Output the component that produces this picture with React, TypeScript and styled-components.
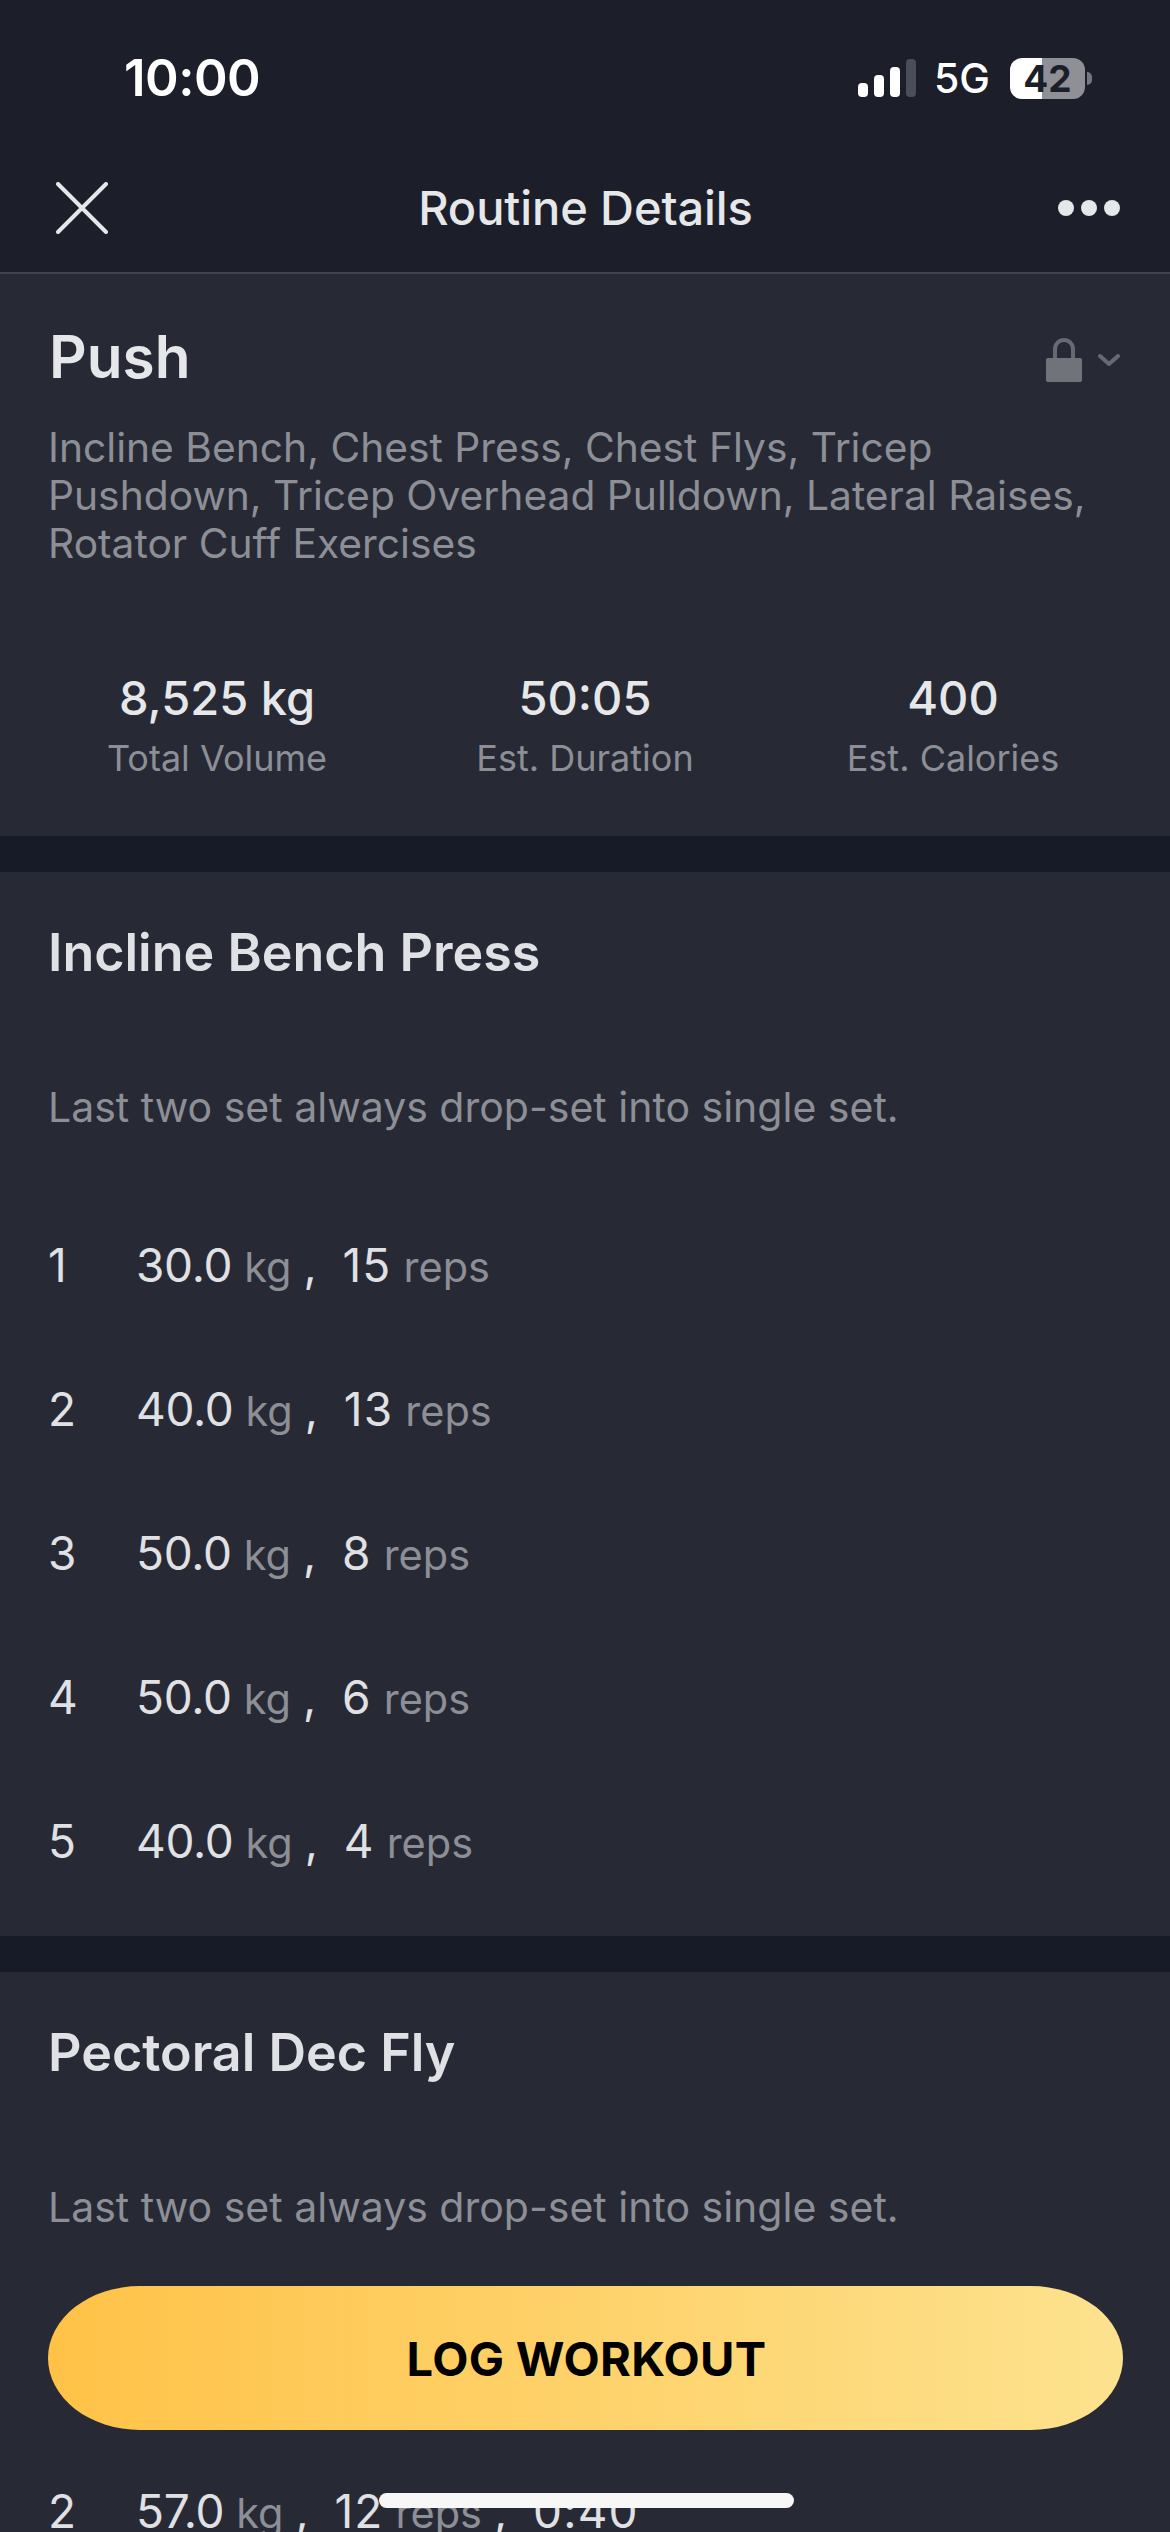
import React from "react";
import styled, { createGlobalStyle } from "styled-components";

const Global = createGlobalStyle`
  html, body { margin: 0; padding: 0; background: #272a34; }
  body { font-family: Inter, "Noto Sans", sans-serif; overflow: hidden; }
  * { box-sizing: border-box; }
`;

const Screen = styled.div`
  position: relative;
  width: 1170px;
  height: 2532px;
  overflow: hidden;
  background: #272a34;
`;

const Top = styled.header`
  height: 274px;
  background: #1c1f2a;
  border-bottom: 2px solid #41434e;
  display: flex;
  flex-direction: column;
`;

const StatusBar = styled.div`
  height: 150px;
  padding: 48px 0 0 124px;
  display: flex;
  align-items: flex-start;
  justify-content: space-between;
`;

const Time = styled.span`
  font-size: 51px;
  font-weight: 600;
  line-height: 60px;
  letter-spacing: -0.5px;
  color: #fff;
`;

const StatusRight = styled.div`
  display: flex;
  align-items: center;
  margin: 8px 85px 0 0;
  height: 44px;
`;

const FiveG = styled.span`
  font-size: 41px;
  font-weight: 500;
  line-height: 44px;
  color: #fff;
  margin: 0 20px 0 18px;
`;

const Battery = styled.div`
  position: relative;
  width: 75px;
  height: 41px;
  border-radius: 12px;
  background: linear-gradient(90deg, #fff 0 43%, #8f9096 43% 100%);
  color: #1c1f2a;
  font-size: 37px;
  font-weight: 700;
  line-height: 41px;
  text-align: center;
  &::after {
    content: "";
    position: absolute;
    right: -7px;
    top: 14px;
    width: 5px;
    height: 13px;
    border-radius: 0 5px 5px 0;
    background: #77787f;
  }
`;

const NavBar = styled.nav`
  flex: 1;
  display: grid;
  grid-template-columns: 1fr auto 1fr;
  align-items: center;
  padding: 0 50px 6px 56px;
`;

const NavEnd = styled.div`
  display: flex;
  justify-content: flex-end;
`;

const NavTitle = styled.h1`
  margin: 0 5px 0 0;
  font-size: 47px;
  font-weight: 500;
  color: #e6e7e9;
  line-height: 56px;
  letter-spacing: -0.1px;
`;

const Section = styled.section<{ $h: number }>`
  height: ${(p) => p.$h}px;
  background: #272a34;
  padding: 0 48px;
  flex-shrink: 0;
`;

const Divider = styled.div`
  height: 36px;
  background: #171b27;
`;

const SummaryHead = styled.div`
  display: flex;
  align-items: center;
  justify-content: space-between;
  padding: 49px 2px 0 1px;
  height: 117px;
`;

const RoutineName = styled.h2`
  margin: 0;
  font-size: 58.5px;
  font-weight: 600;
  line-height: 70px;
  color: #e6e7e9;
`;

const LockGroup = styled.div`
  display: flex;
  align-items: center;
  gap: 16px;
  margin-top: 6px;
`;

const Desc = styled.p`
  margin: 33px 0 0;
  font-size: 40.75px;
  line-height: 48px;
  color: #8d8f97;
  width: 1080px;
`;

const Stats = styled.div`
  display: grid;
  grid-template-columns: repeat(3, 368px);
  margin: 102px 0 0 -15px;
`;

const Stat = styled.div`
  display: flex;
  flex-direction: column;
  align-items: center;
`;

const StatValue = styled.span`
  font-size: 47px;
  font-weight: 500;
  line-height: 56px;
  color: #e6e7e9;
`;

const StatLabel = styled.span`
  font-size: 36px;
  line-height: 44px;
  margin-top: 10px;
  color: #8d8f97;
`;

const ExerciseName = styled.h3`
  margin: 0;
  padding-top: 49px;
  font-size: 52px;
  font-weight: 600;
  line-height: 64px;
  color: #e0e1e4;
`;

const Note = styled.p`
  margin: 0;
  padding-top: 98px;
  font-size: 41px;
  line-height: 48px;
  color: #8d8f97;
`;

const SetList = styled.div`
  margin-top: 106px;
  display: flex;
  flex-direction: column;
  gap: 88px;
`;

const SetRow = styled.div`
  display: flex;
  align-items: baseline;
  height: 56px;
  font-size: 46px;
  line-height: 56px;
  letter-spacing: -0.3px;
  color: #e0e1e4;
`;

const SetIndex = styled.span`
  width: 88px;
`;

const RepCount = styled.span`
  letter-spacing: 1.2px;
`;

const Unit = styled.span`
  font-size: 41.5px;
  letter-spacing: 0;
  color: #8d8f97;
  margin-left: 12px;
`;

const Comma = styled.span`
  font-size: 46px;
  margin: 0 26px 0 12px;
`;

const CtaButton = styled.button`
  position: absolute;
  left: 48px;
  top: 2286px;
  width: 1075px;
  height: 144px;
  border: 0;
  padding: 0 0 0 2px;
  border-radius: 92px / 72px;
  background: linear-gradient(90deg, #ffc247 0%, #fde28e 100%);
  color: #000;
  font-family: inherit;
  font-size: 47px;
  font-weight: 700;
  letter-spacing: 0.3px;
`;

const LastRow = styled(SetRow)`
  position: absolute;
  left: 48px;
  top: 2483px;
`;

const HomeBar = styled.div`
  position: absolute;
  left: 379px;
  top: 2493px;
  width: 415px;
  height: 15px;
  border-radius: 8px;
  background: #f7f7f7;
`;

const sets = [
  ["30.0", "15"],
  ["40.0", "13"],
  ["50.0", "8"],
  ["50.0", "6"],
  ["40.0", "4"],
];

function Signal() {
  return (
    <svg width="58" height="38" viewBox="0 0 58 38">
      <rect x="0" y="24" width="10" height="14" rx="4" fill="#fff" />
      <rect x="16" y="16" width="10" height="22" rx="4" fill="#fff" />
      <rect x="32" y="8" width="10" height="30" rx="4" fill="#fff" />
      <rect x="48" y="0" width="10" height="38" rx="4" fill="#4b4d58" />
    </svg>
  );
}

function Close() {
  return (
    <svg width="52" height="52" viewBox="0 0 52 52">
      <path d="M2 2 L50 50 M50 2 L2 50" stroke="#e6e7e9" strokeWidth="4" strokeLinecap="round" />
    </svg>
  );
}

function Dots() {
  return (
    <svg width="62" height="18" viewBox="0 0 62 18">
      <circle cx="8" cy="9" r="8" fill="#e6e7e9" />
      <circle cx="31" cy="9" r="8" fill="#e6e7e9" />
      <circle cx="54" cy="9" r="8" fill="#e6e7e9" />
    </svg>
  );
}

function Lock() {
  return (
    <svg width="36" height="44" viewBox="0 0 36 44">
      <path d="M9 22 V11 a9 9 0 0 1 18 0 V22" fill="none" stroke="#666a75" strokeWidth="4" />
      <rect x="0" y="20" width="36" height="24" rx="2" fill="#70737a" />
    </svg>
  );
}

function Chevron() {
  return (
    <svg width="22" height="14" viewBox="0 0 22 14">
      <path d="M2 3 L11 11 L20 3" fill="none" stroke="#666a75" strokeWidth="4" strokeLinecap="round" strokeLinejoin="round" />
    </svg>
  );
}

function Row({ i, kg, reps, extra }: { i: number; kg: string; reps: string; extra?: string }) {
  return (
    <>
      <SetIndex>{i}</SetIndex>
      <span>{kg}</span>
      <Unit>kg</Unit>
      <Comma>,</Comma>
      <RepCount>{reps}</RepCount>
      <Unit>reps</Unit>
      {extra && (
        <>
          <Comma>,</Comma>
          <RepCount>{extra}</RepCount>
        </>
      )}
    </>
  );
}

export default function App() {
  return (
    <Screen>
      <Global />
      <Top>
        <StatusBar>
          <Time>10:00</Time>
          <StatusRight>
            <Signal />
            <FiveG>5G</FiveG>
            <Battery>42</Battery>
          </StatusRight>
        </StatusBar>
        <NavBar>
          <Close />
          <NavTitle>Routine Details</NavTitle>
          <NavEnd>
            <Dots />
          </NavEnd>
        </NavBar>
      </Top>
      <Section $h={562}>
        <SummaryHead>
          <RoutineName>Push</RoutineName>
          <LockGroup>
            <Lock />
            <Chevron />
          </LockGroup>
        </SummaryHead>
        <Desc>
          Incline Bench, Chest Press, Chest Flys, Tricep Pushdown, Tricep Overhead Pulldown, Lateral Raises, Rotator Cuff Exercises
        </Desc>
        <Stats>
          <Stat>
            <StatValue>8,525 kg</StatValue>
            <StatLabel>Total Volume</StatLabel>
          </Stat>
          <Stat>
            <StatValue>50:05</StatValue>
            <StatLabel>Est. Duration</StatLabel>
          </Stat>
          <Stat>
            <StatValue>400</StatValue>
            <StatLabel>Est. Calories</StatLabel>
          </Stat>
        </Stats>
      </Section>
      <Divider />
      <Section $h={1064}>
        <ExerciseName>Incline Bench Press</ExerciseName>
        <Note>Last two set always drop-set into single set.</Note>
        <SetList>
          {sets.map(([kg, reps], idx) => (
            <SetRow key={idx}>
              <Row i={idx + 1} kg={kg} reps={reps} />
            </SetRow>
          ))}
        </SetList>
      </Section>
      <Divider />
      <Section $h={560}>
        <ExerciseName>Pectoral Dec Fly</ExerciseName>
        <Note>Last two set always drop-set into single set.</Note>
      </Section>
      <CtaButton>LOG WORKOUT</CtaButton>
      <LastRow>
        <Row i={2} kg="57.0" reps="12" extra="0:40" />
      </LastRow>
      <HomeBar />
    </Screen>
  );
}
